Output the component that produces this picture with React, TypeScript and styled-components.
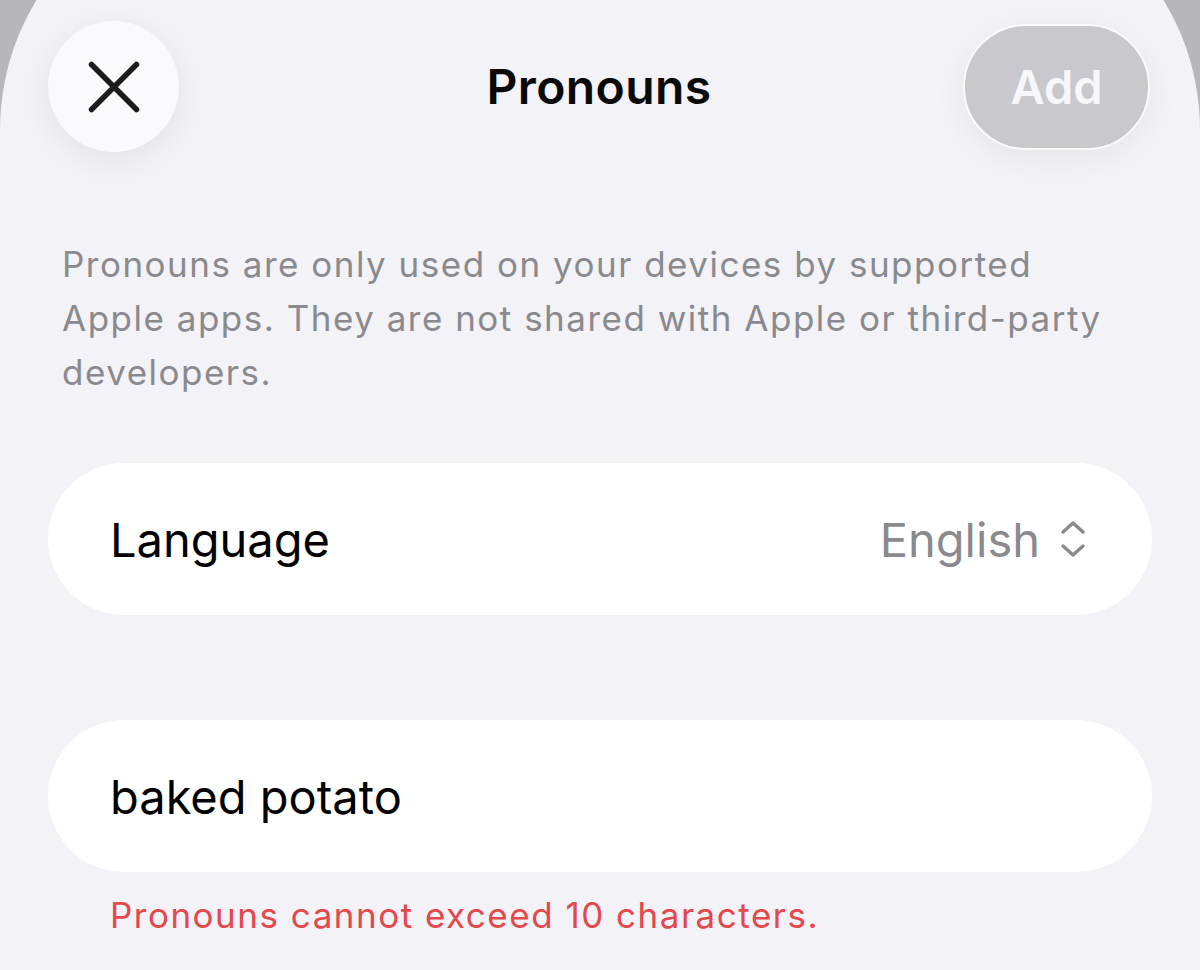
import styled, { createGlobalStyle } from 'styled-components';

const GlobalStyle = createGlobalStyle`
  html, body {
    margin: 0;
    padding: 0;
    background: #b6b6bb;
    overflow: hidden;
  }
  body {
    font-family: Inter, "Noto Sans", "Liberation Sans", sans-serif;
    -webkit-font-smoothing: antialiased;
  }
`;

const Sheet = styled.div`
  margin-top: -120px;
  padding-top: 120px;
  height: 1090px;
  box-sizing: border-box;
  background: #f2f2f7;
  border-radius: 250px 250px 0 0;
`;

const Header = styled.div`
  display: grid;
  grid-template-columns: 1fr auto 1fr;
  align-items: center;
  padding: 21px 50px 0 48px;
`;

const CloseButton = styled.button`
  justify-self: start;
  width: 131px;
  height: 131px;
  border-radius: 50%;
  border: none;
  padding: 0;
  background: #fafafc;
  box-shadow: 0 8px 34px rgba(0, 0, 0, 0.07);
  display: flex;
  align-items: center;
  justify-content: center;
`;

const Title = styled.h1`
  margin: 0;
  font-size: 48px;
  font-weight: 600;
  color: #0a0a0a;
  letter-spacing: 0.4px;
`;

const AddButton = styled.button`
  justify-self: end;
  width: 187px;
  height: 126px;
  border-radius: 63px;
  border: 2px solid #fbfbfd;
  background: #c8c8cd;
  color: #f7f7f9;
  font-family: inherit;
  font-size: 47px;
  font-weight: 600;
  box-shadow: 0 8px 34px rgba(0, 0, 0, 0.06);
`;

const Note = styled.p`
  margin: 85px 0 0 62px;
  width: 1048px;
  font-size: 35px;
  line-height: 54px;
  color: #8a8a8e;
  letter-spacing: 1.5px;
`;

const Card = styled.div<{ $top: number }>`
  margin: ${(p) => p.$top}px 48px 0 48px;
  height: 152px;
  border-radius: 76px;
  background: #ffffff;
  display: flex;
  align-items: center;
  justify-content: space-between;
  padding: 0 66px 0 62px;
  box-sizing: border-box;
`;

const Label = styled.span`
  font-size: 47px;
  line-height: 1;
  color: #000;
`;

const Value = styled.span`
  display: flex;
  align-items: center;
  gap: 20px;
  font-size: 47px;
  line-height: 1;
  color: #8a8a8e;
`;

const ErrorText = styled.p`
  margin: 21px 0 0 110px;
  font-size: 35px;
  line-height: 44px;
  color: #e3484c;
  letter-spacing: 1.5px;
`;

const XIcon = () => (
  <svg width="60" height="60" viewBox="0 0 60 60">
    <path
      d="M7.5 7.5 L52.5 52.5 M52.5 7.5 L7.5 52.5"
      stroke="#1c1c1e"
      strokeWidth="5.5"
      strokeLinecap="round"
    />
  </svg>
);

const UpDown = () => (
  <svg width="26" height="38" viewBox="0 0 26 38">
    <path
      d="M3 12 L13 3 L23 12 M3 26 L13 35 L23 26"
      fill="none"
      stroke="#8a8a8e"
      strokeWidth="3.4"
      strokeLinecap="round"
      strokeLinejoin="round"
    />
  </svg>
);

export default function App() {
  return (
    <>
      <GlobalStyle />
      <Sheet>
        <Header>
          <CloseButton aria-label="Close">
            <XIcon />
          </CloseButton>
          <Title>Pronouns</Title>
          <AddButton>Add</AddButton>
        </Header>
        <Note>
          Pronouns are only used on your devices by supported Apple apps. They
          are not shared with Apple or third-party developers.
        </Note>
        <Card $top={64}>
          <Label>Language</Label>
          <Value>
            English
            <UpDown />
          </Value>
        </Card>
        <Card $top={105}>
          <Label>baked potato</Label>
        </Card>
        <ErrorText>Pronouns cannot exceed 10 characters.</ErrorText>
      </Sheet>
    </>
  );
}
